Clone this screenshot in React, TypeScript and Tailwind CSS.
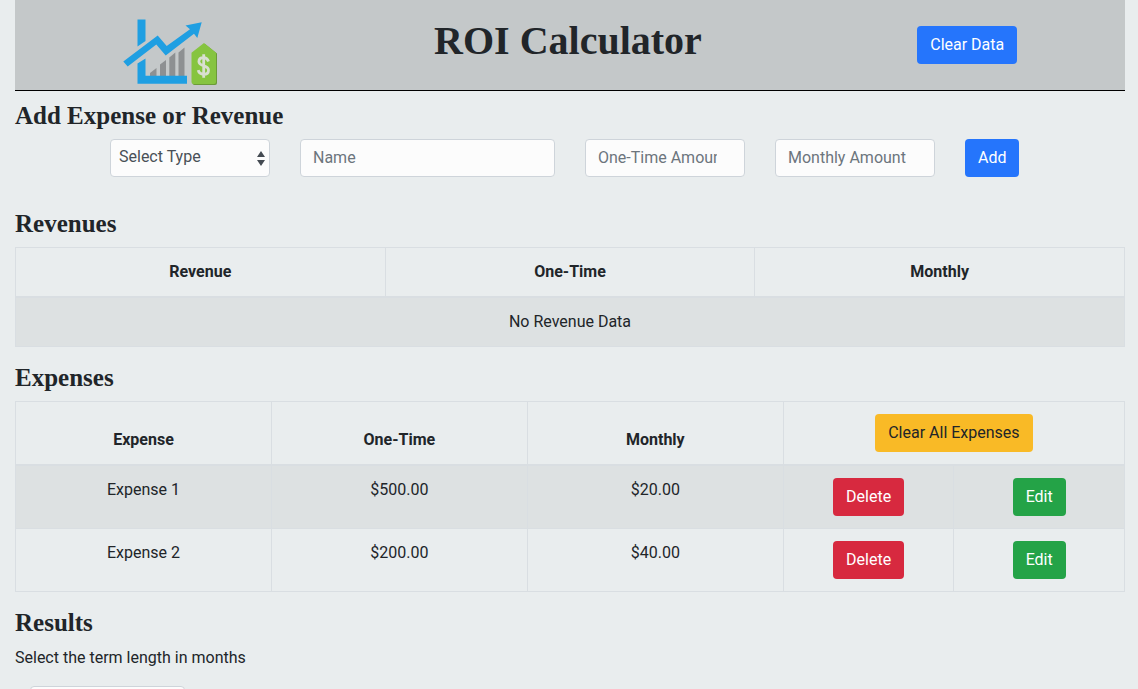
import { useState } from "react";
import type { ReactNode } from "react";

type Expense = { name: string; oneTime: string; monthly: string };

const initialExpenses: Expense[] = [
  { name: "Expense 1", oneTime: "$500.00", monthly: "$20.00" },
  { name: "Expense 2", oneTime: "$200.00", monthly: "$40.00" },
];

const button = "h-[38px] shrink-0 cursor-pointer rounded px-[13px] text-base";
const field =
  "h-[38px] w-full rounded border border-[#ced4da] bg-[#fcfcfc] px-3 pb-0.5 text-base text-[#495057] placeholder:text-[#6c757d]";
const cell = "border border-[#d9dee2] p-3";
const headCell = "border border-b-2 border-[#d9dee2] p-3 align-bottom font-bold";
const table = "w-full table-fixed border-collapse text-center";

function Logo() {
  return (
    <svg className="h-[70px] w-[96px]" viewBox="0 0 96 70" role="img" aria-label="ROI Calculator logo">
      <g fill="#8d9092">
        <path d="M27 55l6.500-5v8H27z" />
        <path d="M37 46.500l6-4.500v16h-6z" />
        <path d="M46.300 39.500l6-5V58h-6z" />
        <path d="M55.500 34.500l6-5V58h-6z" />
      </g>
      <g fill="#1f9fe2">
        <path d="M14.500 1.500h8v21.500l-8 5.500z" />
        <path d="M14.500 45.500l8-5v17.200H64v8H14.500z" />
        <path d="M0.300 43.500L34.700 17.500l9 10.500L67 11.300 62.500 7.500 78.700 4.300 74.300 20 71 15.700 42.700 37.500 33.300 26.500 4.700 48.500z" />
      </g>
      <path d="M69.500 35.500L82 26l12 9.500V65q0 2-2 2H71.500q-2 0-2-2z" fill="#6b9b38" />
      <path d="M68.500 34.700L81 25l12 9.700V64q0 2-2 2H70.500q-2 0-2-2z" fill="#86c440" />
      <path
        d="M85.500 43.500c-.8-2.600-2.500-3.800-4.900-3.800-2.800 0-4.700 1.500-4.700 3.900 0 5.500 9.600 3.200 9.600 8.600 0 2.600-2 4.100-4.900 4.100-2.800 0-4.700-1.300-5.400-4.100M80.700 36.300v23.400"
        fill="none"
        stroke="#d9dfd2"
        strokeWidth="2.800"
      />
    </svg>
  );
}

function Heading({ children, className }: { children: ReactNode; className: string }) {
  return (
    <h2 className={`font-['Liberation_Serif',serif] text-[25px] leading-[30px] font-bold ${className}`}>{children}</h2>
  );
}

export default function App() {
  const [expenses, setExpenses] = useState(initialExpenses);

  return (
    <div className="min-h-screen overflow-hidden bg-[#e9edee] pr-[13px] pb-6 pl-[15px] font-['Roboto',sans-serif] text-base text-[#212529]">
      <header className="flex h-[91px] items-start justify-around border-b border-black bg-[#c4c8c9]">
        <div className="pt-[18px]">
          <Logo />
        </div>
        <h1 className="pt-[17px] font-['Liberation_Serif',serif] text-[40px] leading-[48px] font-bold">
          ROI Calculator
        </h1>
        <div className="pt-[26px]">
          <button type="button" className={`${button} bg-[#2575fc] text-white`} onClick={() => setExpenses([])}>
            Clear Data
          </button>
        </div>
      </header>

      <main>
        <Heading className="mt-2.5 mb-2">Add Expense or Revenue</Heading>
        <form className="-mx-[15px] grid grid-cols-12" onSubmit={(e) => e.preventDefault()}>
          <div className="relative col-span-2 col-start-2 px-[15px]">
            <select aria-label="Type" className={`${field} appearance-none pr-6 pl-2`} defaultValue="">
              <option value="">Select Type</option>
              <option value="revenue">Revenue</option>
              <option value="expense">Expense</option>
            </select>
            <svg
              className="pointer-events-none absolute top-3 right-5 h-4 w-2"
              viewBox="0 0 8 16"
              fill="#444b52"
              aria-hidden="true"
            >
              <path d="M4 0l4 6H0zM4 15l4-6H0z" />
            </svg>
          </div>
          <div className="col-span-3 px-[15px]">
            <input aria-label="Name" placeholder="Name" className={field} />
          </div>
          <div className="col-span-2 px-[15px]">
            <input type="number" aria-label="One-Time Amount" placeholder="One-Time Amount" className={field} />
          </div>
          <div className="col-span-2 px-[15px]">
            <input type="number" aria-label="Monthly Amount" placeholder="Monthly Amount" className={field} />
          </div>
          <div className="col-span-2 px-[15px]">
            <button type="submit" className={`${button} bg-[#2575fc] text-white`}>
              Add
            </button>
          </div>
        </form>

        <Heading className="mt-8 mb-2">Revenues</Heading>
        <table className={table}>
          <thead>
            <tr>
              <th className={headCell}>Revenue</th>
              <th className={headCell}>One-Time</th>
              <th className={headCell}>Monthly</th>
            </tr>
          </thead>
          <tbody>
            <tr className="bg-[#dde1e2]">
              <td className={cell} colSpan={3}>
                No Revenue Data
              </td>
            </tr>
          </tbody>
        </table>

        <Heading className="mt-4 mb-2">Expenses</Heading>
        <table className={table}>
          <colgroup>
            <col className="w-3/13" />
            <col className="w-3/13" />
            <col className="w-3/13" />
            <col />
            <col />
          </colgroup>
          <thead>
            <tr>
              <th className={headCell}>Expense</th>
              <th className={headCell}>One-Time</th>
              <th className={headCell}>Monthly</th>
              <th className={headCell} colSpan={2}>
                <button
                  type="button"
                  className={`${button} mx-auto block bg-[#f9ba26] font-normal`}
                  onClick={() => setExpenses([])}
                >
                  Clear All Expenses
                </button>
              </th>
            </tr>
          </thead>
          <tbody>
            {expenses.map((expense) => (
              <tr key={expense.name} className="odd:bg-[#dde1e2]">
                <td className={`${cell} align-top`}>{expense.name}</td>
                <td className={`${cell} align-top`}>{expense.oneTime}</td>
                <td className={`${cell} align-top`}>{expense.monthly}</td>
                <td className={cell}>
                  <button
                    type="button"
                    className={`${button} mx-auto block bg-[#d7293f] text-white`}
                    onClick={() => setExpenses(expenses.filter((item) => item !== expense))}
                  >
                    Delete
                  </button>
                </td>
                <td className={cell}>
                  <button type="button" className={`${button} mx-auto block bg-[#24a347] text-white`}>
                    Edit
                  </button>
                </td>
              </tr>
            ))}
          </tbody>
        </table>

        <Heading className="mt-4 mb-2">Results</Heading>
        <label htmlFor="term" className="block">
          Select the term length in months
        </label>
        <div className="mt-4 pl-[15px]">
          <input
            id="term"
            type="number"
            className="h-[38px] w-[155px] rounded border border-[#ced4da] bg-[#fcfcfc] px-3"
          />
        </div>
      </main>
    </div>
  );
}
